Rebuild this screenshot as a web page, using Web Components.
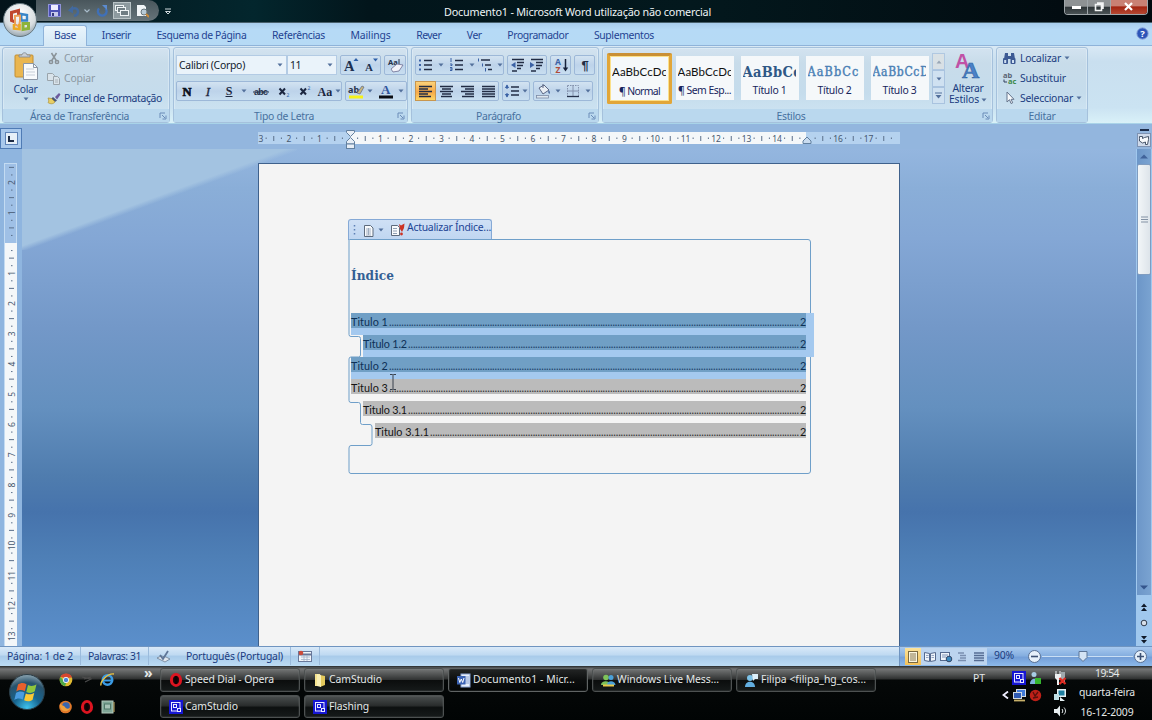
<!DOCTYPE html>
<html lang="pt">
<head>
<meta charset="utf-8">
<title>Documento1 - Microsoft Word</title>
<style>
  html, body {
    margin: 0;
    padding: 0;
  }
  body {
    width: 1152px;
    height: 720px;
    overflow: hidden;
    font-family: "Noto Sans", "Open Sans", sans-serif;
    font-size: 10.4px;
    color: #1b3c80;
  }
</style>
</head>
<body>
<word-app></word-app>

<script>
// name: [width, height, markup]
const lines = (rows, color = '#222c44') => rows.map(([x1, x2, y]) =>
  `<path d="M${x1} ${y}H${x2}" stroke="${color}" stroke-width="1.5"/>`).join('');

const ICONS = {
  arrow: [6, 4, '<path d="M0.5 0.5h5l-2.5 3z" fill="#53709c"/>'],
  uparrow: [6, 4, '<path d="M0.5 3.5h5l-2.5-3z" fill="#8d99a8"/>'],
  morearrow: [7, 7, '<path d="M0 1h7" stroke="#53709c"/><path d="M.5 3h6l-3 3.500z" fill="#53709c"/>'],
  launcher: [8, 8, '<path d="M1 6V1h5" fill="none" stroke="#6a8cb8"/><path d="M3 3l3 3M7 3.5V7H3.5" fill="none" stroke="#6a8cb8"/>'],
  save: [13, 13, '<rect x=".5" y=".5" width="12" height="12" fill="#4b50b5" stroke="#8f92d8"/><rect x="3" y="1" width="7" height="5" fill="#eef"/><rect x="3" y="8" width="7" height="4" fill="#c6c9ea"/><rect x="4" y="9" width="2" height="3" fill="#33387f"/>'],
  undo: [12, 12, '<path d="M3 5c3-3 7-2 7 1.500s-2 4-4 4.500" fill="none" stroke="#41699f" stroke-width="2.400"/><path d="M0 5.500l5-5v8z" fill="#41699f"/>'],
  qatarrow: [6, 4, '<path d="M.5 .5L3 3 5.500 .5" fill="none" stroke="#a9bccb" stroke-width="1.200"/>'],
  redo: [12, 12, '<path d="M9.500 3.500A4.300 4.300 0 1 1 3 3.500" fill="none" stroke="#3f70b8" stroke-width="2.400"/><path d="M6 0h5v5z" fill="#5b8bd0"/>'],
  cascade: [18, 17, '<rect x=".5" y=".5" width="17" height="16" fill="#8d9a9f" stroke="#b9c3c6"/><g fill="#6f7d83" stroke="#eef3f4"><rect x="2.500" y="3.500" width="8" height="5"/><rect x="4.500" y="5.500" width="8" height="5"/><rect x="7.500" y="8.500" width="8" height="5"/></g>'],
  preview: [13, 14, '<path d="M1 1h7l2 2v9H1z" fill="#f3f6f8"/><circle cx="8" cy="8" r="3" fill="#b7cad6" stroke="#68757c"/><path d="M10 10l3 3" stroke="#c98a3a" stroke-width="2"/>'],
  qatmore: [7, 7, '<path d="M0 1h6" stroke="#cfd8dc"/><path d="M.5 3.500h5L3 6z" fill="none" stroke="#cfd8dc"/>'],
  office: [38, 38, '<defs><radialGradient id="o" cx=".5" cy=".3" r=".75"><stop offset="0" stop-color="#fff"/><stop offset=".65" stop-color="#d8dde0"/><stop offset="1" stop-color="#8797a2"/></radialGradient></defs><circle cx="19" cy="19" r="16.500" fill="url(#o)" stroke="#65777f"/><g fill="none" stroke-width="3"><path d="M17.500 15V9.500l-7 2v8l4 1.500" stroke="#c0472e"/><path d="M20 13l6 1v5.500h-5.500z" stroke="#3a86c8" stroke-width="2.400"/><path d="M22 22.500h5.500v5l-5.500 1z" stroke="#8db33a"/><path d="M19 20v-5.500l-5 .5v8.500l4 2z" stroke="#eca05a" stroke-width="2"/><path d="M13 23v4.500l5.500 .5v-5" stroke="#eca822" stroke-width="2.600"/></g>'],
  paste: [26, 29, '<rect x="2" y="4" width="18" height="22" rx="1" fill="#eab650" stroke="#c28e32"/><path d="M6 6V4h3c0-3 5-3 5 0h3v2z" fill="#c9ced4" stroke="#7d8791" stroke-width=".8"/><path d="M10.500 12.500h10l4 4v12h-14z" fill="#f8fafc" stroke="#8b96a5"/><path d="M20.500 12.500v4h4" fill="none" stroke="#8b96a5"/><path d="M13 18h8M13 21h9M13 24h9" stroke="#c7ced8"/>'],
  cut: [13, 13, '<g fill="none" stroke="#8a9298" stroke-width="1.500"><path d="M3.500 1l5 8M8.500 1l-5 8"/><circle cx="3" cy="10" r="1.600"/><circle cx="9" cy="10" r="1.600"/></g>'],
  copy: [14, 13, '<g fill="#d9e3ea" stroke="#9aa4ab"><path d="M.5 1.500h5l2 2v5h-7z"/><path d="M6.500 4.500h4l2 2v6h-6z"/></g><path d="M8 8h3M8 10h3" stroke="#aab2b8"/>'],
  brush: [14, 13, '<path d="M8 5l4-4 1.500 1.500-3.500 5z" fill="#6b5a9c"/><path d="M6 5l4 3.500-2 1.500-4-3z" fill="#4c5874"/><path d="M1 6l3.500 .5L8 10c-2 2.500-5 2-7 .5 1-1 .8-3 0-4.500z" fill="#e8cf66" stroke="#a88c36" stroke-width=".7"/>'],
  bold: [18, 16, '<text x="9" y="12.500" text-anchor="middle" font-family="Liberation Serif" font-weight="bold" font-size="12.500" fill="#0b1220" stroke="#0b1220" stroke-width=".6">N</text>'],
  italic: [18, 16, '<text x="9" y="12.500" text-anchor="middle" font-family="Liberation Serif" font-style="italic" font-size="13" fill="#1c2740" stroke="#1c2740" stroke-width=".3">I</text>'],
  underline: [18, 16, '<text x="9" y="11.500" text-anchor="middle" font-family="Liberation Serif" font-weight="bold" font-size="12" fill="#1c2740">S</text><path d="M5.500 13.500h7" stroke="#1c2740"/>'],
  strike: [18, 16, '<text x="2" y="12" font-family="Liberation Sans" font-weight="bold" font-size="9" textLength="14" fill="#26314a">abc</text><path d="M1 9h16" stroke="#26314a"/>'],
  sub: [18, 16, '<path d="M4.500 5.500l5.500 6M10 5.500l-5.500 6" stroke="#1c2740" stroke-width="2"/><text x="11.500" y="13.500" font-size="5" fill="#2d5fa8">2</text>'],
  sup: [18, 16, '<path d="M4.500 5.500l5.500 6M10 5.500l-5.500 6" stroke="#1c2740" stroke-width="2"/><text x="11.500" y="6.500" font-size="5" fill="#2d5fa8">2</text>'],
  acase: [18, 16, '<text x="1.500" y="12.500" font-family="Liberation Serif" font-weight="bold" font-size="12" fill="#1c2740">Aa</text>'],
  grow: [18, 17, '<text x="2" y="14" font-family="Liberation Serif" font-weight="bold" font-size="14.500" fill="#1c3050">A</text><path d="M11.500 4h5L14 1z" fill="#2d5fa8"/>'],
  shrink: [18, 17, '<text x="3" y="14" font-family="Liberation Serif" font-weight="bold" font-size="11" fill="#1c3050">A</text><path d="M11 1.500h5L13.500 4.500z" fill="#2d5fa8"/>'],
  clear: [18, 17, '<text x="2" y="8" font-size="7.500" font-weight="bold" fill="#26314a">Aa</text><path d="M13 2v6" stroke="#26314a"/><path d="M5 12l6-5 6 1-4 6-6 1z" fill="#f3f3fa" stroke="#76799c" stroke-width=".9"/>'],
  mark: [20, 17, '<text x="2" y="9.500" font-size="9" font-weight="bold" fill="#26314a">ab</text><path d="M11 10l5-7 2 1-4 7z" fill="#c8b67c" stroke="#5b6784" stroke-width=".7"/><rect x="3" y="12.500" width="14" height="3" fill="#f6f21a"/>'],
  fcolor: [18, 17, '<text x="4" y="11" font-family="Liberation Serif" font-weight="bold" font-size="13" fill="#31569c">A</text><rect x="2" y="12.500" width="14" height="3" fill="#0a0d14"/>'],
  bullets: [16, 14, lines([[6, 14, 2.5], [6, 14, 7], [6, 14, 11.5]]) + '<g fill="#3b62a5"><rect x="1" y="1.500" width="2" height="2"/><rect x="1" y="6" width="2" height="2"/><rect x="1" y="10.500" width="2" height="2"/></g>'],
  numbers: [16, 14, lines([[6, 14, 2.5], [6, 14, 7], [6, 14, 11.5]]) + '<path d="M2 0v4M1 6h2v1.500H1.500M1 9.500h2v1.500h-2m2 0v1.500h-2" stroke="#3b62a5" fill="none"/>'],
  multi: [18, 14, lines([[4, 13, 2], [8, 14, 7], [11, 15, 11.5]]) + '<path d="M1.500 .5v3M5.500 5.500v3M8.500 10v3.500" stroke="#3b62a5"/>'],
  outdent: [16, 14, lines([[2, 14, 1.5], [7, 14, 4.5], [7, 13, 7.5], [7, 11, 10.5], [2, 7, 13]]) + '<path d="M5.500 4L1 7l4.500 3z" fill="#3b62a5"/>'],
  indent: [16, 14, lines([[2, 14, 1.5], [7, 14, 4.5], [7, 13, 7.5], [7, 11, 10.5], [2, 7, 13]]) + '<path d="M1 4l4.500 3L1 10z" fill="#3b62a5"/>'],
  sort: [16, 16, '<text x="2" y="7.500" font-size="8.500" font-weight="bold" fill="#3b62a5">A</text><text x="2.500" y="15.500" font-size="8.500" font-weight="bold" fill="#b04a3a">Z</text><path d="M12.500 2v10" stroke="#16203a" stroke-width="1.500"/><path d="M9.800 10.500h5.400L12.500 14.500z" fill="#16203a"/>'],
  pilcrow: [14, 14, '<text x="7" y="11.500" text-anchor="middle" font-family="Liberation Sans" font-weight="bold" font-size="13" fill="#222c44">¶</text>'],
  left: [15, 13, lines([[1, 14, 1.5], [1, 10, 4], [1, 14, 6.5], [1, 10, 9], [1, 13, 11.5]])],
  center: [15, 13, lines([[1, 14, 1.5], [3, 12, 4], [1, 14, 6.5], [3, 12, 9], [2, 13, 11.5]])],
  right: [15, 13, lines([[1, 14, 1.5], [5, 14, 4], [1, 14, 6.5], [5, 14, 9], [2, 14, 11.5]])],
  justify: [15, 13, lines([[1, 14, 1.5], [1, 14, 4], [1, 14, 6.5], [1, 14, 9], [1, 14, 11.5]])],
  spacing: [16, 14, lines([[7, 15, 3], [7, 15, 7], [7, 15, 11]]) + '<path d="M3 1v4M3 9v4" stroke="#3b62a5" stroke-width="1.200"/><path d="M.8 4L3 .5 5.200 4zM.8 10L3 13.500 5.200 10z" fill="#3b62a5"/>'],
  bucket: [17, 16, '<path d="M4 5l5-3 5 5-6 4z" fill="#e9eef4" stroke="#5b6784"/><path d="M13.500 7c2 1.500 1.500 3 1 4-1.500-1-1.500-2-1-4z" fill="#4a6a9c"/><path d="M8 5V1" stroke="#5b6784"/><rect x="1.500" y="12.500" width="12" height="2.500" fill="#dde7ef" stroke="#7c8ba5" stroke-width=".8"/>'],
  borders: [14, 14, '<rect x="1.500" y="1.500" width="11" height="11" fill="none" stroke="#8492ad" stroke-dasharray="1.500 1"/><path d="M7 1v12M1 7h12" stroke="#8492ad"/><path d="M1 12.500h12" stroke="#26314a" stroke-width="1.300"/>'],
  styles: [30, 28, '<text x="2" y="16" font-family="Liberation Sans" font-weight="bold" font-size="20" fill="#c051a6">A</text><text x="9" y="26" font-family="Liberation Serif" font-weight="bold" font-size="24" fill="#4a82c8" stroke="#2f5f9f" stroke-width=".6">A</text>'],
  find: [15, 13, '<g fill="#3d5a94"><rect x="1" y="6" width="5" height="6" rx="1"/><rect x="8.500" y="6" width="5" height="6" rx="1"/><path d="M3 1h3v6H2zM9 1h3l1 6H9z"/><rect x="5" y="4" width="5" height="3"/></g><rect x="2.200" y="8" width="2" height="3" fill="#cfe0f2"/><rect x="10" y="8" width="2" height="3" fill="#cfe0f2"/>'],
  replace: [15, 14, '<text x="1" y="6.500" font-size="7.500" font-weight="bold" fill="#5b6474">ab</text><text x="6" y="13" font-size="7.500" font-weight="bold" fill="#3d8a4c">ac</text><path d="M2 8.500v2.500h3" stroke="#33415c" fill="none"/>'],
  select: [14, 14, '<path d="M4 1v10l2.500-2.300L8 12.500l1.700-.7-1.600-3.500H11z" fill="#f8fafc" stroke="#65748c"/>'],
  help: [13, 13, '<circle cx="6.500" cy="6.500" r="5.700" fill="#2c55b8" stroke="#8fa9dc"/><text x="6.500" y="10" text-anchor="middle" font-size="9.500" font-weight="bold" fill="#fff">?</text>'],
  page: [12, 13, '<path d="M1.500 1.500h6l2.500 2.500v8.500H1.500z" fill="#f8fafc" stroke="#5d6a7c"/><path d="M3 5h5M3 7h5M3 9h5M3 11h5M5.500 4v7" stroke="#8fa0b5" stroke-width=".8"/>'],
  update: [15, 13, '<path d="M1.500 2.500h6l2 2v8h-8z" fill="#f8fafc" stroke="#5d6a7c"/><path d="M3 5.500h4M3 8h4M3 10.500h4" stroke="#8fa0b5"/><path d="M9 1l2 1.500L14.500 .5 14 5l-2 4-2-3z" fill="#cc3324"/><circle cx="11.500" cy="11" r="1.400" fill="#cc3324"/>'],
  spell: [16, 13, '<path d="M1 8l4-2 5 1 4 2-5 3z" fill="#dfe6ee" stroke="#6c7d92" stroke-width=".8"/><path d="M4 5l3 4 5-8" fill="none" stroke="#5f7698" stroke-width="1.800"/>'],
  macro: [14, 12, '<rect x=".5" y="1.500" width="13" height="10" fill="#f1f5fa" stroke="#68789a"/><path d="M.5 4.500h13" stroke="#68789a" stroke-width="2"/><path d="M3 7h9M3 9.500h9M6 5v6M9 5v6" stroke="#9fb0c8" stroke-width=".8"/><circle cx="3" cy="3" r="2.300" fill="#cc4a3a"/>'],
  vprint: [14, 12, '<rect x="2.500" y=".5" width="9" height="11" fill="#fbf6e0" stroke="#7a6a42"/><path d="M4 3h6M4 5h6M4 7h6M4 9h6" stroke="#7a6a42" stroke-width=".9"/>'],
  vread: [14, 12, '<path d="M1.500 1.500l5 1v8l-5-1zM12.500 1.500l-5 1v8l5-1z" fill="#eef4fb" stroke="#54698e"/><path d="M3 4.500h2.500M3 6.500h2.500M8.500 4.500H11M8.500 6.500H11" stroke="#7d90b3" stroke-width=".8"/>'],
  vweb: [14, 12, '<rect x="1.500" y="1.500" width="9" height="8" fill="#eef4fb" stroke="#54698e"/><path d="M3 4h6M3 6h4" stroke="#7d90b3"/><circle cx="10" cy="8" r="2.800" fill="#3c8abf" stroke="#346"/>'],
  vout: [14, 12, lines([[3, 9, 2], [5, 11, 4.5], [5, 11, 7], [3, 11, 9.5]], '#7a8fb0')],
  vdraft: [14, 12, lines([[2, 12, 2], [2, 12, 4.5], [2, 12, 7], [2, 12, 9.5]], '#566c93')],
  minus: [15, 15, '<circle cx="7.500" cy="7.500" r="6" fill="#e6f0fa" stroke="#586f92"/><path d="M4 7.500h7" stroke="#3d5174" stroke-width="1.600"/>'],
  plus: [15, 15, '<circle cx="7.500" cy="7.500" r="6" fill="#e6f0fa" stroke="#586f92"/><path d="M4 7.500h7M7.500 4v7" stroke="#3d5174" stroke-width="1.600"/>'],
  orb: [38, 38, '<defs><radialGradient id="s" cx=".5" cy=".95" r=".95"><stop offset="0" stop-color="#3fc3ee"/><stop offset=".4" stop-color="#17648f"/><stop offset=".75" stop-color="#28526c"/><stop offset="1" stop-color="#8ea6b2"/></radialGradient></defs><circle cx="19" cy="19" r="17.500" fill="url(#s)" stroke="#2b3d47"/><path d="M10 11.500c3-2 5.500-2 8.500-.3l-1.700 7c-3-1.600-5.500-1.600-8.500 .3z" fill="#e8602c"/><path d="M20 12c3 1.500 5.500 1.300 8.500-.7l-1.700 7c-3 2-5.500 2-8.500 .6z" fill="#8fc63d"/><path d="M8 20c3-2 5.500-2 8.500-.4l-1.700 7c-3-1.600-5.500-1.600-8.500 .4z" fill="#4a9ce0"/><path d="M17.800 20.400c3 1.400 5.500 1.300 8.500-.6l-1.700 7c-3 2-5.500 2-8.500 .5z" fill="#fbc834"/>'],
  chrome: [14, 14, '<circle cx="7" cy="7" r="6.300" fill="#e0bb32"/><path d="M1.500 4A6.300 6.300 0 0 1 13 4.500L7 5z" fill="#d8452f"/><path d="M1.500 4a6.300 6.300 0 0 0 4.500 9.200L7.500 9 4 7z" fill="#4fa94a"/><circle cx="7" cy="7" r="2.700" fill="#4c86dc" stroke="#eee"/>'],
  dark: [14, 14, '<path d="M2 4l9 2-6 3M4 6l7-2" fill="none" stroke="#4c4c4c" stroke-width="1.100"/>'],
  ie: [15, 15, '<circle cx="7.500" cy="8" r="4.700" fill="none" stroke="#3b9be4" stroke-width="2.600"/><path d="M4 8.500h8" stroke="#3b9be4" stroke-width="2"/><path d="M1 13.500C0 9 8 1 14 2" fill="none" stroke="#e9c243" stroke-width="1.400"/>'],
  firefox: [15, 14, '<circle cx="7.500" cy="7" r="6.300" fill="#e0782a"/><circle cx="8" cy="6" r="3.800" fill="#3a66ad"/><path d="M2 3c1 3 4 2 5 4s3 2 5 1c-1 4-9 5-10-2z" fill="#f0a03c"/>'],
  opera: [14, 14, '<ellipse cx="7" cy="7" rx="4.600" ry="5.400" fill="#27060a" stroke="#dd1420" stroke-width="3"/><ellipse cx="7" cy="7" rx="1.700" ry="4.200" fill="#0c0204"/>'],
  book: [14, 14, '<rect x="1" y="1" width="11" height="12" fill="#7fa596" stroke="#b5cabd"/><rect x="3.500" y="4" width="6" height="5" fill="#a7c2b6" stroke="#4e7768"/><path d="M13 2v10" stroke="#cbb46a"/>'],
  folder: [14, 14, '<path d="M2 1h5v12H2z" fill="#f5e38f"/><path d="M7 2l5 1v9l-5 2z" fill="#e3c95c"/><path d="M4 1l4 1v12l-4-1z" fill="#f9efb4"/>'],
  cam: [14, 14, '<rect width="14" height="14" fill="#1616d2"/><rect x="2.500" y="2.500" width="8.500" height="8.500" fill="none" stroke="#e8e8ff"/><rect x="4.500" y="4.500" width="3" height="3" fill="none" stroke="#e8e8ff"/><rect x="8.500" y="8.500" width="3" height="3" fill="#1616d2" stroke="#e8e8ff"/>'],
  word: [15, 15, '<rect x="5" y="1" width="9" height="13" fill="#e8effa" stroke="#8aa4d4"/><path d="M8 4h5M8 6h5M8 8h5M8 10h5" stroke="#86a0d2"/><rect x="1" y="3" width="8.500" height="8.500" fill="#3a62b4"/><path d="M2.500 5l1.300 4.500L5.300 6l1.400 3.500L8 5" fill="none" stroke="#fff"/>'],
  msn: [16, 14, '<circle cx="6" cy="4.500" r="2.800" fill="#7fc35a"/><path d="M1 12c0-5 9-5 10 0z" fill="#7fc35a"/><circle cx="11" cy="4.500" r="2.500" fill="#4aa0d8"/><path d="M7 12c0-5 8-5 8.500 0z" fill="#4aa0d8"/><path d="M3 12.500h11" stroke="#e9c84a" stroke-width="2"/>'],
  buddy: [15, 15, '<circle cx="6" cy="5" r="3" fill="#7cc2e8"/><path d="M1 14c0-7 10-7 10 0z" fill="#62aee0"/><path d="M8 1h6v5h-3l-2 2z" fill="#dceffa"/>'],
  traybuddy: [13, 14, '<circle cx="5" cy="3.500" r="2.500" fill="#a8cce4"/><path d="M1 13c0-7 9-7 9 0z" fill="#7fb3dc"/><rect x="6" y="7" width="6" height="6" fill="#34b52e"/>'],
  battery: [14, 14, '<path d="M2 3h6v4l-2 2v5H4V9L2 7z" fill="#ecf0f2"/><path d="M3 0v3M7 0v3" stroke="#ecf0f2"/><rect x="8" y="1" width="4" height="11" fill="#9fa8ac"/><path d="M6.500 7l6 6M12.500 7l-6 6" stroke="#e02a20" stroke-width="2.200"/>'],
  net: [15, 14, '<rect x="4.500" y="1.500" width="9" height="7" fill="#3f79d8" stroke="#cfd8e0"/><rect x="1.500" y="4.500" width="8" height="6" fill="#2c59b4" stroke="#cfd8e0"/><path d="M2 12.500h11" stroke="#c7b069" stroke-width="1.800"/>'],
  red: [13, 13, '<circle cx="6.500" cy="6.500" r="5.700" fill="#bd2018"/><path d="M4 3l2 4 3-4M4 9l5-1" stroke="#59100c" stroke-width="1.300" fill="none"/>'],
  screens: [14, 14, '<rect x="4" y="1" width="9" height="8" fill="#e6f2f4"/><rect x="5.500" y="2.500" width="6" height="5" fill="#1e7fa0"/><path d="M1 6h5v6H1z" fill="#bfe0e6"/><path d="M7 9l5 4H7z" fill="#e6f2f4"/>'],
  sound: [14, 12, '<path d="M1 4h3l3-3.500v11L4 8H1z" fill="#e8eef0"/><path d="M9 4c1 1.500 1 2.500 0 4M11 2.500c2 2.500 2 4.500 0 7" fill="none" stroke="#e8eef0"/>'],
  ibeam: [8, 16, '<path d="M1 .5h2.500L4 1l.5-.5H7M4 1v14M1 15.500h2.500L4 15l.5.5H7" fill="none" stroke="#39414c"/>'],
  rulerbtn: [14, 14, '<rect x=".5" y=".5" width="13" height="13" fill="#cfdaea" stroke="#7e93b3"/><path d="M2.500 5.500v-2h3v2l2-1 4-1v3l-1 5h-2V9l-3 1-3-2z" fill="#f8fafc" stroke="#39475c" stroke-width=".9"/>']
};

const escape = text => text.replace(/&/g, '&amp;').replace(/</g, '&lt;');

class UiIcon extends HTMLElement {
  connectedCallback() {
    const [w, h, markup] = ICONS[this.getAttribute('name')];
    this.attachShadow({mode: 'open'}).innerHTML = `
      <style>
        :host { display: inline-flex; flex: none; align-items: center; justify-content: center; }
        svg { display: block; flex: none; }
      </style>
      <svg width="${w}" height="${h}" viewBox="0 0 ${w} ${h}">${markup}</svg>
    `;
  }
}

// Single line of text, tracked so that it fills the width given in "w".
class FitLabel extends HTMLElement {
  connectedCallback() {
    const root = this.attachShadow({mode: 'open'});
    root.innerHTML = `
      <style>
        :host { display: inline-block; flex: none; white-space: nowrap; }
        span { display: inline-block; }
      </style>
      <span><slot></slot></span>
    `;
    const width = Number(this.getAttribute('w'));
    const natural = root.querySelector('span').getBoundingClientRect().width;
    this.style.width = `${width}px`;
    this.style.letterSpacing = `${(width - natural) / this.textContent.length}px`;
  }
}

// Base for the parts below: css + html go in the shadow root.
class Part extends HTMLElement {
  connectedCallback() {
    this.attachShadow({mode: 'open'}).innerHTML = `
      <style>* { box-sizing: border-box; } ${this.css()}</style>${this.html()}`;
  }
}

class WordApp extends Part {
  css() {
    return `:host { display: flex; flex-direction: column; width: 1152px; height: 720px; overflow: hidden; }`;
  }
  html() {
    return `
      <title-bar></title-bar>
      <ribbon-tabs></ribbon-tabs>
      <ribbon-panel></ribbon-panel>
      <doc-area></doc-area>
      <status-bar></status-bar>
      <task-bar></task-bar>
    `;
  }
}

class TitleBar extends Part {
  css() {
    return `
      :host { position: relative; z-index: 2; display: flex; flex: none; height: 23px; background: linear-gradient(90deg, #04141b, #03262d 22%, #02151b 32%, #03181d 60%, #02090e); border-bottom: 1px solid #48606c; }
      .qat { display: flex; align-items: center; width: 123px; height: 21px; margin-left: 36px; padding-left: 12px; background: linear-gradient(#49565c, #66747a); border-radius: 0 11px 11px 0; }
      .title { margin-left: 272px; line-height: 24px; font-size: 10.800px; color: #eef4f6; }
      .controls { display: flex; margin-left: auto; margin-right: 4px; height: 15px; border: 1px solid #9fa6aa; border-top: 0; border-radius: 0 0 4px 4px; overflow: hidden; }
      .controls svg { display: block; border-right: 1px solid #9fa6aa; background: linear-gradient(#8e9294 45%, #2d3437 50%, #4a5255); }
      .controls svg:last-child { border: 0; background: linear-gradient(#c98174 40%, #a32512 50%, #b54832); }
      .orb { position: absolute; left: 1px; top: 1px; }
    `;
  }
  html() {
    return `
      <div class="qat">
        <ui-icon name="save"></ui-icon>
        <ui-icon name="undo" style="margin-left:7px"></ui-icon>
        <ui-icon name="qatarrow" style="margin-left:4px"></ui-icon>
        <ui-icon name="redo" style="margin-left:6px"></ui-icon>
        <ui-icon name="cascade" style="margin-left:5px"></ui-icon>
        <ui-icon name="preview" style="margin-left:5px"></ui-icon>
      </div>
      <ui-icon name="qatmore" style="margin-left:6px"></ui-icon>
      <fit-label class="title" w="267">Documento1 - Microsoft Word utilização não comercial</fit-label>
      <div class="controls">
        <svg width="23" height="14"><rect x="7" y="6" width="9" height="3" fill="#fff"/></svg>
        <svg width="23" height="14"><path d="M7.500 4.500h6v6h-6zM9 3h6v6" fill="none" stroke="#f2f4f4" stroke-width="1.600"/></svg>
        <svg width="36" height="14"><path d="M14 3l7 7M21 3l-7 7" stroke="#fff" stroke-width="2.200"/></svg>
      </div>
      <ui-icon class="orb" name="office"></ui-icon>
    `;
  }
}

class RibbonTabs extends Part {
  css() {
    return `
      :host { display: flex; flex: none; height: 22px; padding-left: 41px; background: linear-gradient(#a9cdec, #b6daf6 30%, #b6daf5); }
      .tab { padding: 4px 12.800px 0; line-height: 16px; color: #1f4392; }
      .tab.on { margin: 2px 2px -1px; padding: 1px 10px 0; background: linear-gradient(#eaf5fc, #d5e8f5); border: 1px solid #8fb3d9; border-bottom: 0; border-radius: 3px 3px 0 0; z-index: 1; }
      .help { margin: 4px 3px 0 auto; height: 13px; }
    `;
  }
  html() {
    const tabs = [['Base', 22], ['Inserir', 29], ['Esquema de Página', 90], ['Referências', 53], ['Mailings', 40],
      ['Rever', 25], ['Ver', 15], ['Programador', 61], ['Suplementos', 60]];
    return tabs.map(([name, w], i) =>
      `<div class="tab ${i ? '' : 'on'}"><fit-label w="${w}">${name}</fit-label></div>`).join('')
      + '<ui-icon class="help" name="help"></ui-icon>';
  }
}

class RibbonGroup extends Part {
  css() {
    return `
      :host { display: flex; flex-direction: column; flex: none; height: 76px; border: 1px solid #a5c1dc; border-radius: 3px; background: linear-gradient(#d3e3f0, #c8dcea 20%, #c5dcec 60%, #d0e6f4); box-shadow: inset 0 0 0 1px rgba(240, 250, 255, .35); }
      .body { flex: 1; display: flex; min-height: 0; }
      .foot { display: grid; grid-template-columns: 1fr 13px; align-items: center; justify-items: center; height: 13px; background: #bad8ee; color: #47719f; line-height: 12px; }
      :host([plain]) .foot { grid-template-columns: 1fr; }
    `;
  }
  html() {
    return `
      <div class="body"><slot></slot></div>
      <div class="foot">
        <fit-label w="${this.getAttribute('lw')}">${this.getAttribute('label')}</fit-label>
        ${this.hasAttribute('plain') ? '' : '<ui-icon name="launcher"></ui-icon>'}
      </div>
    `;
  }
}

// Outlined box that joins several small tools.
class ToolBox extends Part {
  css() {
    return `
      :host { display: flex; flex: none; align-items: center; height: 20px; border: 1px solid #9db8d8; border-radius: 2px; background: linear-gradient(#d3e3f1, #bdd3ea 50%, #c8def0); }
      :host([field]) { background: #eaf3fa; border-color: #b3cbe4; border-radius: 0; }
    `;
  }
  html() {
    return '<slot></slot>';
  }
}

class StyleCard extends Part {
  css() {
    return `
      :host { display: flex; flex-direction: column; flex: none; width: 58px; height: 44px; margin: 3px 3.500px 0; background: #f5f8fa; color: #16245c; }
      :host([on]) { width: 65px; height: 51px; margin: 0; border: 3px solid #e2a638; border-top-color: #c98f35; border-radius: 2px; box-shadow: inset 0 0 0 1px #fbe08a; }
      .sample { height: 26px; line-height: 32px; white-space: nowrap; margin: 0 3px 0 2px; overflow: hidden; }
      .name { display: flex; justify-content: center; line-height: 19px; }
    `;
  }
  html() {
    return `
      <div class="sample" style="${this.getAttribute('look')}"><fit-label w="${this.getAttribute('sw')}">${this.getAttribute('sample')}</fit-label></div>
      <div class="name"><fit-label w="${this.getAttribute('nw')}">${this.textContent}</fit-label></div>
    `;
  }
}

class RibbonPanel extends Part {
  css() {
    return `
      :host { display: flex; flex: none; height: 79px; padding: 1px 0 0 2px; gap: 3px; background: linear-gradient(#d9e9f5, #c9dfef 20%, #cbe3f2 80%, #d9f1f8); border-top: 1px solid #8fb3d9; border-bottom: 1px solid #a9d3e8; }
      .rows { display: flex; flex-direction: column; }
      .row { display: flex; align-items: center; height: 20px; }
      .tools { display: flex; gap: 3px; }
      .clip { width: 44px; display: flex; flex-direction: column; align-items: center; padding: 3px 0 0 1px; }
      .clip fit-label { line-height: 16px; margin-top: 1px; }
      .off { color: #8c98a2; }
      .field { color: #111a2c; }
      .hot { height: 18px; background: linear-gradient(#fbd27a, #f7a948 55%, #fbd564); box-shadow: 0 0 0 1px #c8964e; }
      .scroll { display: grid; grid-template-rows: repeat(3, 17px); width: 13px; }
      .scroll div { display: flex; align-items: center; justify-content: center; border: 1px solid #a9c3df; background: #cfe1f1; }
      .scroll div:first-child { background: #dde2e4; opacity: .8; }
      .big { width: 46px; display: flex; flex-direction: column; align-items: center; line-height: 11px; padding-top: 4px; }
    `;
  }
  html() {
    const icon = (name, w) => `<ui-icon name="${name}" style="width:${w}px"></ui-icon>`;
    const serif = "font-family:'DejaVu Serif Condensed','DejaVu Serif',serif;";
    return `
      <ribbon-group label="Área de Transferência" lw="99" style="width:168px">
        <div class="clip"><ui-icon name="paste"></ui-icon><fit-label w="24">Colar</fit-label>${icon('arrow', 6)}</div>
        <div class="rows off">
          <div class="row">${icon('cut', 14)}<fit-label w="29" style="margin-left:3px">Cortar</fit-label></div>
          <div class="row">${icon('copy', 14)}<fit-label w="31" style="margin-left:3px">Copiar</fit-label></div>
          <div class="row" style="color:#1b3c80">${icon('brush', 14)}<fit-label w="98" style="margin-left:3px">Pincel de Formatação</fit-label></div>
        </div>
      </ribbon-group>

      <ribbon-group label="Tipo de Letra" lw="60" style="width:235px">
        <div class="rows" style="padding:7px 0 0 2px; gap:6px">
          <div class="tools field">
            <div style="display:flex">
              <tool-box field style="width:111px"><fit-label w="66" style="margin-left:2px">Calibri (Corpo)</fit-label><ui-icon name="arrow" style="margin:0 3px 0 auto"></ui-icon></tool-box>
              <tool-box field style="width:50px"><fit-label w="11" style="margin-left:2px">11</fit-label><ui-icon name="arrow" style="margin:0 3px 0 auto"></ui-icon></tool-box>
            </div>
            <tool-box style="width:41px">${icon('grow', 20)}${icon('shrink', 19)}</tool-box>
            <tool-box style="width:22px">${icon('clear', 20)}</tool-box>
          </div>
          <div class="tools">
            <tool-box style="width:166px">${icon('bold', 20)}${icon('italic', 21)}${icon('underline', 22)}${icon('arrow', 8)}${icon('strike', 26)}${icon('sub', 20)}${icon('sup', 22)}${icon('acase', 18)}${icon('arrow', 7)}</tool-box>
            <tool-box style="width:62px">${icon('mark', 20)}${icon('arrow', 8)}${icon('fcolor', 23)}${icon('arrow', 7)}</tool-box>
          </div>
        </div>
      </ribbon-group>

      <ribbon-group label="Parágrafo" lw="45" style="width:188px">
        <div class="rows" style="padding:7px 0 0 3px; gap:6px">
          <div class="tools">
            <tool-box style="width:89px">${icon('bullets', 20)}${icon('arrow', 9)}${icon('numbers', 23)}${icon('arrow', 8)}${icon('multi', 20)}${icon('arrow', 7)}</tool-box>
            <tool-box style="width:40px">${icon('outdent', 20)}${icon('indent', 18)}</tool-box>
            <tool-box style="width:21px">${icon('sort', 19)}</tool-box>
            <tool-box style="width:21px">${icon('pilcrow', 19)}</tool-box>
          </div>
          <div class="tools">
            <tool-box style="width:84px"><ui-icon class="hot" name="left" style="width:19px"></ui-icon>${icon('center', 22)}${icon('right', 21)}${icon('justify', 20)}</tool-box>
            <tool-box style="width:28px">${icon('spacing', 18)}${icon('arrow', 7)}</tool-box>
            <tool-box style="width:60px">${icon('bucket', 19)}${icon('arrow', 9)}${icon('borders', 22)}${icon('arrow', 7)}</tool-box>
          </div>
        </div>
      </ribbon-group>

      <ribbon-group label="Estilos" lw="29" style="width:391px">
        <div style="display:flex; padding:5px 0 0 4px">
          <style-card on sample="AaBbCcDc" sw="55" nw="41" look="font:11.500px/32px Lato; color:#111; height:26px">¶ Normal</style-card>
          <style-card sample="AaBbCcDc" sw="55" nw="53" look="font:11.500px/32px Lato; color:#111">¶ Sem Esp...</style-card>
          <style-card sample="AaBbCc" sw="59" nw="34" look="${serif} font-weight:bold; font-size:14.500px; color:#2f5886">Título 1</style-card>
          <style-card sample="AaBbCc" sw="52" nw="34" look="${serif} font-size:12.500px; color:#4a7fb5; -webkit-text-stroke:.4px">Título 2</style-card>
          <style-card sample="AaBbCcD" sw="57" nw="34" look="${serif} font-size:12px; color:#4a7fb5; -webkit-text-stroke:.4px">Título 3</style-card>
          <div class="scroll"><div>${icon('uparrow', 6)}</div><div>${icon('arrow', 6)}</div><div>${icon('morearrow', 7)}</div></div>
        </div>
        <div class="big">
          <ui-icon name="styles"></ui-icon>
          <fit-label w="31" style="margin-top:3px">Alterar</fit-label>
          <div style="display:flex; align-items:center; gap:2px"><fit-label w="30">Estilos</fit-label>${icon('arrow', 6)}</div>
        </div>
      </ribbon-group>

      <ribbon-group label="Editar" lw="27" plain style="width:92px">
        <div class="rows" style="padding-left:5px">
          <div class="row">${icon('find', 15)}<fit-label w="41" style="margin:0 3px">Localizar</fit-label>${icon('arrow', 6)}</div>
          <div class="row">${icon('replace', 15)}<fit-label w="46" style="margin:0 3px">Substituir</fit-label></div>
          <div class="row">${icon('select', 15)}<fit-label w="53" style="margin:0 3px">Seleccionar</fit-label>${icon('arrow', 6)}</div>
        </div>
      </ribbon-group>
    `;
  }
}

const CM = 30.5;

class RulerH extends Part {
  css() {
    return `:host { display: block; width: 642px; height: 25px; } svg { display: block; }`;
  }
  html() {
    let marks = '';
    for (let q = -12; q <= 71; q++) {
      const x = 350 + q * CM / 4 + (q === -12 ? 2.5 : 0);
      const cm = Math.abs(q / 4);
      if (q === 0 || q === 60 || x > 897) continue;
      if (q % 4 === 0) marks += `<text x="${x}" y="141.500" text-anchor="middle">${cm}</text>`;
      else if (q % 2 === 0) marks += `<path d="M${x} 136v5" stroke="#5b6f8a"/>`;
      else marks += `<path d="M${x} 137.500v1.500" stroke="#5b6f8a"/>`;
    }
    return `
      <svg width="642" height="25" viewBox="258 124 642 25" font-size="8.500" fill="#47586f">
        <rect x="258" y="132" width="642" height="12" fill="#b5d2ef"/>
        <rect x="350" y="132" width="456" height="12" fill="#f4f7f9"/>
        ${marks}
        <path d="M346.500 130.500h8v2l-4 4-4-4zM346.500 144v-2.500l4-4 4 4v2.500z" fill="#e7eef6" stroke="#62809f"/>
        <rect x="346.500" y="144" width="8" height="4.500" fill="#e7eef6" stroke="#62809f"/>
        <path d="M803 143.500v-2.500l4-4 4 4v2.500z" fill="#c9dcf0" stroke="#62809f"/>
      </svg>
    `;
  }
}

class RulerV extends Part {
  css() {
    return `:host { display: block; width: 22px; height: 497px; background: #8fb5df; } svg { display: block; }`;
  }
  html() {
    let marks = '';
    for (let q = -10; q <= 52; q++) {
      const y = 243 + q * 30.25 / 4;
      if (q === 0) continue;
      if (q % 4 === 0) marks += `<text transform="translate(14.500 ${y}) rotate(-90)" text-anchor="middle">${Math.abs(q / 4)}</text>`;
      else if (q % 2 === 0) marks += `<path d="M9 ${y}h5" stroke="#5b6f8a"/>`;
      else marks += `<path d="M11 ${y}h1.500" stroke="#5b6f8a"/>`;
    }
    return `
      <svg width="22" height="497" viewBox="0 149 22 497" font-size="8.500" fill="#47586f">
        <rect x="4.500" y="163.500" width="12" height="483" fill="#9fc0e6" stroke="#c3dbf2"/>
        <rect x="5" y="243" width="12" height="404" fill="#f4f7f9"/>
        ${marks}
      </svg>
    `;
  }
}

class VScroll extends Part {
  css() {
    return `
      :host { display: flex; flex-direction: column; width: 16px; height: 497px; background: #a0c8ee; }
      .track { display: flex; flex-direction: column; width: 14px; height: 446px; margin-left: 1px; background: linear-gradient(90deg, #6c96c8, #7aa3d1); }
      .end { height: 15px; display: flex; align-items: center; justify-content: center; }
      .thumb { flex: none; height: 111px; display: flex; align-items: center; justify-content: center; border: 1px solid #7f9cc0; border-radius: 2px; background: linear-gradient(90deg, #f2f6f8, #dde4ea); }
      .space { flex: 1; }
      .nav { flex: 1; }
      svg { display: block; }
    `;
  }
  html() {
    return `
      <div class="track">
        <div class="end"><svg width="8" height="5"><path d="M0 4.500h8L4 .5z" fill="#41639a"/></svg></div>
        <div class="thumb"><svg width="7" height="7"><path d="M0 1h7M0 3.500h7M0 6h7" stroke="#8392a4"/></svg></div>
        <div class="space"></div>
        <div class="end"><svg width="8" height="5"><path d="M0 .5h8L4 4.500z" fill="#34558c"/></svg></div>
      </div>
      <svg class="nav" width="16" height="51" viewBox="0 595 16 51">
        <path d="M5 607h6l-3-3.500zM5 611h6l-3-3.500zM5 636h6l-3 3.500zM5 640h6l-3 3.500z" fill="#101a2a"/>
        <circle cx="8" cy="623" r="2.800" fill="#d6dee8" stroke="#303c4c"/>
      </svg>
    `;
  }
}

class TocRow extends Part {
  css() {
    return `
      :host { display: flex; height: 22px; --field: #bbbbbb; --gap: transparent; color: #141414; }
      :host([sel]) { --field: #709fc5; --gap: #a4c9ef; color: #0d3056; }
      .main { background: var(--gap); }
      .line { display: flex; justify-content: space-between; height: 15px; line-height: 17px; background: var(--field); }
      .dots { opacity: .85; }
      .tail { width: 8px; }
      :host([tail]) .tail { background: #a4c9ef; }
    `;
  }
  html() {
    const indent = Number(this.getAttribute('indent') || 0);
    const w = Number(this.getAttribute('w'));
    const leader = 455 - indent - w - 8;
    return `
      <div class="main" style="width:${455 - indent}px; margin-left:${indent}px">
        <div class="line">
          <fit-label w="${w}">${this.textContent}</fit-label>
          <fit-label class="dots" w="${leader}">${'.'.repeat(Math.round(leader / 2.45))}</fit-label>
          <fit-label w="6">2</fit-label>
        </div>
      </div>
      <div class="tail"></div>
    `;
  }
}

class DocPage extends Part {
  css() {
    return `
      :host { display: block; width: 642px; height: 483px; padding: 56px 0 0 90px; background: #f4f4f4; border: 1px solid #3f618c; border-bottom: 0; position: relative; font-family: Lato, sans-serif; font-size: 10.800px; }
      .bar { display: flex; align-items: center; width: 144px; height: 21px; margin: -1px 0 0 -1px; padding-left: 4px; background: linear-gradient(#cfe0f5, #bfd6f1); border: 1px solid #85a9d6; border-bottom: 0; border-radius: 3px 3px 0 0; font: 10.400px "Noto Sans", sans-serif; color: #1d4494; }
      .frame { display: grid; width: 466px; margin: -1px 0 0 -1px; }
      .frame > * { grid-area: 1 / 1; }
      .frame svg { display: block; }
      .content { padding: 27px 0 0 3px; }
      h1 { margin: 0 0 29px; font: bold 13.500px/18px "DejaVu Serif Condensed", "DejaVu Serif", serif; color: #335f94; }
      .cursor { position: absolute; left: 130px; top: 210px; }
    `;
  }
  html() {
    return `
      <div class="bar">
        <svg width="4" height="12"><path d="M1.500 1v11" stroke="#5d7fb4" stroke-width="1.500" stroke-dasharray="1.500 2.500"/></svg>
        <ui-icon name="page" style="margin:0 0 0 7px"></ui-icon>
        <ui-icon name="arrow" style="margin:0 6px 0 3px"></ui-icon>
        <ui-icon name="update" style="margin-top:-2px"></ui-icon>
        <fit-label w="84" style="margin:-6px 0 0 2px">Actualizar Índice...</fit-label>
      </div>
      <div class="frame">
        <svg width="466" height="235" viewBox="348 239 466 235">
          <path d="M349.500 239.500H808q2.500 0 2.500 2.500V471q0 2.500-2.500 2.500H351q-2 0-2-2V448q0-2.500 2-2.500H370q2 0 2-2V427q0-2.500-2-2.500H362.500q-2 0-2-2V405q0-2.500-2-2.500H351q-2 0-2-2V359q0-2 2-2H358.500q2 0 2-2V338.500q0-2-2-2H351q-2 0-2-2V239.500" fill="none" stroke="#6f9fc9"/>
        </svg>
        <div class="content">
          <h1><fit-label w="43">Índice</fit-label></h1>
          <toc-row w="37" sel tail>Titulo 1 </toc-row>
          <toc-row w="44" indent="12" sel tail>Titulo 1.2</toc-row>
          <toc-row w="37" sel>Titulo 2 </toc-row>
          <toc-row w="37">Titulo 3 </toc-row>
          <toc-row w="44" indent="12">Titulo 3.1</toc-row>
          <toc-row w="54" indent="24">Titulo 3.1.1</toc-row>
        </div>
      </div>
      <ui-icon class="cursor" name="ibeam"></ui-icon>
    `;
  }
}

class DocArea extends Part {
  css() {
    return `
      :host { display: grid; flex: none; grid-template: 25px 497px / 22px 1fr 16px; height: 522px; background: #93b6de; overflow: hidden; }
      .corner { display: flex; align-items: center; justify-content: center; width: 22px; height: 21px; margin-top: 4px; border: 1px solid #4f7bb5; background: #a8c8ec; }
      .corner div { width: 13px; height: 13px; border: 1px solid #5e83b8; background: #e6eff8; display: flex; align-items: center; justify-content: center; }
      ruler-h { margin-left: 236px; }
      .split { display: flex; flex-direction: column; align-items: center; gap: 2px; padding-top: 5px; }
      .split div { width: 9px; height: 2px; background: #1c2c48; }
      .desk {
        padding: 14px 0 0 236px;
        background:
          linear-gradient(to bottom right, #a3c3e1 48%, #a3c3e100 51%) no-repeat 0 0 / 275px 101px,
          linear-gradient(#94b6df, #8aaed8 8%, #84a7d5 18%, #7398c8 36%, #6490bf 52%, #4f7cae 66%, #4673ac 73%, #4e7fb6 82%, #5b8fcb);
      }
    `;
  }
  html() {
    return `
      <div class="corner"><div><svg width="6" height="6"><path d="M1 0v5h5" fill="none" stroke="#1d2a44" stroke-width="2"/></svg></div></div>
      <ruler-h></ruler-h>
      <div class="split"><div></div><ui-icon name="rulerbtn"></ui-icon></div>
      <ruler-v></ruler-v>
      <div class="desk"><doc-page></doc-page></div>
      <v-scroll></v-scroll>
    `;
  }
}

class StatusBar extends Part {
  css() {
    return `
      :host { display: flex; flex: none; height: 20px; border-top: 1px solid #6f94c0; background: linear-gradient(#d9e9f8, #c0daf2 40%, #a9cbea 50%, #bcdcf4); line-height: 17px; }
      .item { display: flex; align-items: center; height: 18px; border-right: 1px solid #9bbbdc; padding: 0 7px; }
      .right { display: flex; align-items: center; margin-left: auto; width: 253px; padding-left: 5px; border-left: 1px solid #6f94c0; background: linear-gradient(#a7c9ef, #86afe0 45%, #749fd8 55%, #8cb9ea); }
      .views { display: flex; background: #bcd4ef; }
      .views ui-icon { width: 16.400px; height: 17px; }
      .views ui-icon:first-child { background: linear-gradient(#fbe29a, #f5c25a); }
    `;
  }
  html() {
    return `
      <div class="item"><fit-label w="66">Página: 1 de 2</fit-label></div>
      <div class="item"><fit-label w="53">Palavras: 31</fit-label></div>
      <div class="item" style="border:0"><ui-icon name="spell"></ui-icon></div>
      <div class="item"><fit-label w="97">Português (Portugal)</fit-label></div>
      <div class="item"><ui-icon name="macro"></ui-icon></div>
      <div class="right">
        <div class="views"><ui-icon name="vprint"></ui-icon><ui-icon name="vread"></ui-icon><ui-icon name="vweb"></ui-icon><ui-icon name="vout"></ui-icon><ui-icon name="vdraft"></ui-icon></div>
        <fit-label w="20" style="margin:-2px 0 0 7px">90%</fit-label>
        <ui-icon name="minus" style="margin-left:13px"></ui-icon>
        <svg width="91" height="15"><path d="M0 7.500h91" stroke="#c9dff5"/><path d="M37 2.500h8v6l-4 4-4-4z" fill="#d3e3f4" stroke="#5b7496"/></svg>
        <ui-icon name="plus"></ui-icon>
      </div>
    `;
  }
}

class TaskButton extends Part {
  css() {
    return `
      :host { display: flex; align-items: center; padding-left: 7px; border: 1px solid #4d5151; border-radius: 3px; background: linear-gradient(#747676, #4a4c4c 30%, #303232 49%, #0b0d0d 51%, #161a1a); color: #e4e8e8; box-shadow: inset 0 0 0 1px rgba(140, 150, 150, .12); }
      :host([on]) { background: linear-gradient(#232525, #0c0e0e 50%, #040606); border-color: #606464; }
      :host([low]) { background: linear-gradient(#4a4e4e, #2a2d2d 45%, #0d1010 55%, #161a1a); }
      fit-label { margin: -2px 0 0 2px; }
    `;
  }
  html() {
    return `
      <ui-icon name="${this.getAttribute('icon')}" style="width:15px"></ui-icon>
      <fit-label w="${this.getAttribute('w')}">${escape(this.getAttribute('text'))}</fit-label>
    `;
  }
}

class TaskBar extends Part {
  css() {
    return `
      :host { display: flex; flex: none; height: 54px; background: linear-gradient(#262a2b, #747576 3px, #4c4e4e 9px, #2e3030 13px, #050808 14px, #010404); color: #e4e8e8; }
      .start { padding: 7px 0 0 8px; width: 58px; }
      .quick { display: grid; grid-template-columns: repeat(3, 21px); grid-auto-rows: 27px; width: 84px; margin-left: -3px; justify-items: center; }
      .more { width: 17px; font-size: 14px; line-height: 14px; margin-left: 3px; padding-left: 2px; font-weight: bold; }
      .tasks { display: grid; grid-template-columns: repeat(5, 140px); grid-template-rows: 24px 23px; gap: 3px 4px; margin-left: 1px; padding-top: 2px; width: 716px; height: 52px; }
      .lang { margin: 4px 0 0 97px; line-height: 16px; }
      .tray { display: grid; grid-template-columns: 12px 16px 17px 7px 17px; grid-template-rows: 20px 14px 18px; align-items: center; justify-items: center; margin: 2px 0 0 14px; height: 52px; }
      .clock { display: flex; flex-direction: column; align-items: center; width: 56px; margin: -2px 0 0 11px; }
    `;
  }
  html() {
    return `
      <div class="start"><ui-icon name="orb"></ui-icon></div>
      <div class="quick">
        ${['chrome', 'dark', 'ie', 'firefox', 'opera', 'book'].map(n => `<ui-icon name="${n}"></ui-icon>`).join('')}
      </div>
      <div class="more">»</div>
      <div class="tasks">
        <task-button icon="opera" w="89" text="Speed Dial - Opera"></task-button>
        <task-button icon="folder" w="53" text="CamStudio"></task-button>
        <task-button on icon="word" w="102" text="Documento1 - Micr..."></task-button>
        <task-button icon="msn" w="102" text="Windows Live Mess..."></task-button>
        <task-button icon="buddy" w="105" text="Filipa &lt;filipa_hg_cos..."></task-button>
        <task-button low icon="cam" w="53" text="CamStudio"></task-button>
        <task-button low icon="cam" w="40" text="Flashing"></task-button>
      </div>
      <fit-label class="lang" w="12">PT</fit-label>
      <div class="tray">
        <span></span><ui-icon name="cam"></ui-icon><ui-icon name="traybuddy"></ui-icon><span></span><ui-icon name="battery"></ui-icon>
        <svg width="7" height="8"><path d="M6 .5L1.500 4 6 7.500" fill="none" stroke="#eef" stroke-width="1.800"/></svg><ui-icon name="net"></ui-icon><ui-icon name="red"></ui-icon><span></span><ui-icon name="screens"></ui-icon>
        <span></span><span></span><span></span><span></span><ui-icon name="sound"></ui-icon>
      </div>
      <div class="clock">
        <fit-label w="24" style="line-height:18px">19:54</fit-label>
        <fit-label w="56" style="line-height:21px">quarta-feira</fit-label>
        <fit-label w="53" style="line-height:18px">16-12-2009</fit-label>
      </div>
    `;
  }
}

customElements.define('word-app', WordApp);
customElements.define('title-bar', TitleBar);
customElements.define('ribbon-tabs', RibbonTabs);
customElements.define('ribbon-panel', RibbonPanel);
customElements.define('ribbon-group', RibbonGroup);
customElements.define('tool-box', ToolBox);
customElements.define('style-card', StyleCard);
customElements.define('doc-area', DocArea);
customElements.define('ruler-h', RulerH);
customElements.define('ruler-v', RulerV);
customElements.define('v-scroll', VScroll);
customElements.define('doc-page', DocPage);
customElements.define('toc-row', TocRow);
customElements.define('status-bar', StatusBar);
customElements.define('task-bar', TaskBar);
customElements.define('task-button', TaskButton);
customElements.define('ui-icon', UiIcon);
// last, so that every label is measured in its final font
customElements.define('fit-label', FitLabel);
</script>
</body>
</html>
